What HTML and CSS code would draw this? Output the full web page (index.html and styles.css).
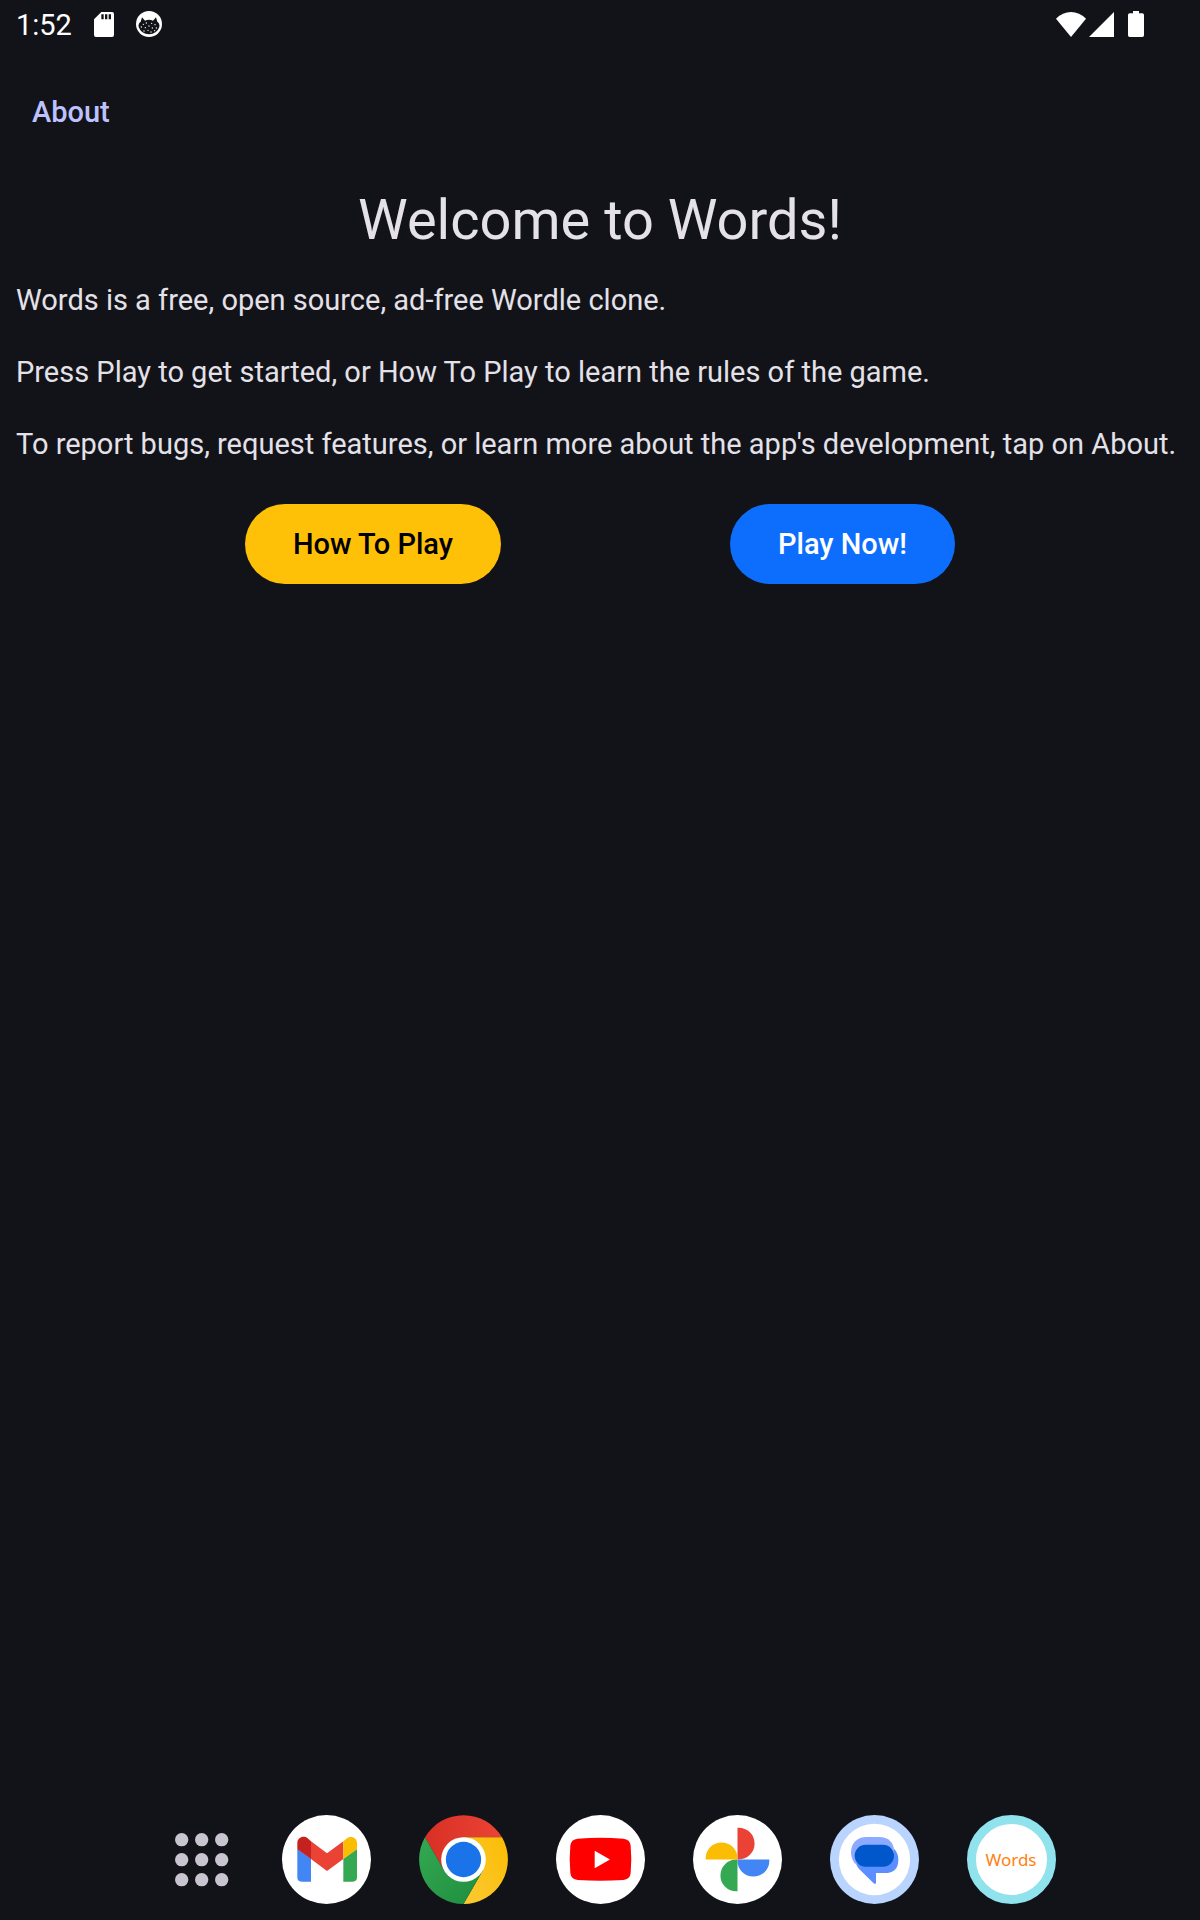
FILE: index.html
```html
<!DOCTYPE html>
<html lang="en">
<head>
<meta charset="utf-8">
<meta name="viewport" content="width=device-width, initial-scale=1">
<title>Words</title>
<link rel="stylesheet" href="styles.css">
</head>
<body>
<header class="status-bar">
  <div class="status-group status-left">
    <time class="clock">1:52</time>
    <svg class="status-sd" viewBox="0 0 60 75" role="img" aria-label="SD card"><path fill="#fff" fill-rule="evenodd" d="M22 0H54Q60 0 60 6V69Q60 75 54 75H6Q0 75 0 69V22ZM22 7V22H29V7ZM33 7V22H40V7ZM44 7V22H51V7Z"/></svg>
    <svg class="status-cat" viewBox="0 0 78 78" role="img" aria-label="Notification">
      <circle cx="39" cy="39" r="39" fill="#fff"/>
      <path fill="#121318" d="M18 19L27 29Q39 24 51 29L60 19L64 32Q72 38 70 48Q62 70 39 70T8 48Q6 38 14 32Z"/>
      <g fill="#fff"><circle cx="22" cy="40" r="2"/><circle cx="31" cy="36" r="2"/><circle cx="47" cy="37" r="2"/><circle cx="57" cy="41" r="2"/><circle cx="16" cy="48" r="2"/><circle cx="28" cy="50" r="2"/><circle cx="39" cy="45" r="2"/><circle cx="49" cy="51" r="2"/><circle cx="61" cy="51" r="2"/><circle cx="24" cy="60" r="2"/><circle cx="36" cy="58" r="2"/><circle cx="45" cy="63" r="2"/><circle cx="56" cy="59" r="2"/></g>
    </svg>
  </div>
  <div class="status-group status-right">
    <svg class="status-wifi" viewBox="0 0 90 75" role="img" aria-label="Wi-Fi"><path fill="#fff" d="M45 75L0 20Q20 0 45 0T90 20Z"/></svg>
    <svg class="status-signal" viewBox="0 0 75 75" role="img" aria-label="Signal"><path fill="#fff" d="M0 75L75 0V75Z"/></svg>
    <svg class="status-battery" viewBox="0 0 48 78" role="img" aria-label="Battery"><path fill="#fff" d="M15 0H33V7H43Q48 7 48 12V73Q48 78 43 78H5Q0 78 0 73V12Q0 7 5 7H15Z"/></svg>
  </div>
</header>

<nav class="top-nav"><button class="text-button" type="button">About</button></nav>

<main class="content">
  <h1 class="title">Welcome to Words!</h1>
  <div class="intro">
    <p class="copy">Words is a free, open source, ad-free Wordle clone.</p>
    <p class="copy">Press Play to get started, or How To Play to learn the rules of the game.</p>
    <p class="copy">To report bugs, request features, or learn more about the app's development, tap on About.</p>
  </div>
  <div class="actions">
    <button class="pill pill-help" type="button">How To Play</button>
    <button class="pill pill-play" type="button">Play Now!</button>
  </div>
</main>

<footer class="dock">
  <button class="app app-drawer" type="button" aria-label="All apps">
    <svg class="app-icon" viewBox="0 0 267 267"><g fill="#c8c5d0"><circle cx="74" cy="74" r="20"/><circle cx="134" cy="74" r="20"/><circle cx="194" cy="74" r="20"/><circle cx="74" cy="134" r="20"/><circle cx="134" cy="134" r="20"/><circle cx="194" cy="134" r="20"/><circle cx="74" cy="194" r="20"/><circle cx="134" cy="194" r="20"/><circle cx="194" cy="194" r="20"/></g></svg>
  </button>
  <div class="favorites">
    <button class="app" type="button" aria-label="Gmail">
      <svg class="app-icon" viewBox="0 0 267 267"><circle cx="133.500" cy="133.500" r="133.500" fill="#fff"/><path fill="#4285f4" d="M46 102L87 131V200H59Q46 200 46 187Z"/><path fill="#34a853" d="M184 131L225 102V187Q225 200 212 200H184Z"/><path fill="#c5221f" d="M46 103V84C46 68 64 60 77 70L87 79V132Z"/><path fill="#ea4335" d="M87 79L135 115L184 79V132L135 168L87 132Z"/><path fill="#fbbc04" d="M184 79L195 70C208 60 225 69 225 84V103L184 132Z"/></svg>
    </button>
    <button class="app" type="button" aria-label="Chrome">
      <svg class="app-icon" viewBox="0 0 267 267"><defs><linearGradient id="red" x1="0" x2="1"><stop stop-color="#d93025"/><stop offset="1" stop-color="#ea4335"/></linearGradient><linearGradient id="green" x1="1" y1="1" x2="0" y2="0"><stop stop-color="#1e8e3e"/><stop offset="1" stop-color="#34a853"/></linearGradient><linearGradient id="yellow" x1="0" y1="1" x2="1" y2="0"><stop stop-color="#fcc934"/><stop offset="1" stop-color="#fbbc04"/></linearGradient></defs><path fill="url(#red)" d="M18 67A133.500 133.500 0 0 1 249 67H133.500V133.500L76 167Z"/><path fill="url(#yellow)" d="M249 67A133.500 133.500 0 0 1 133.500 267L191 167L133.500 133.500V67Z"/><path fill="url(#green)" d="M133.500 267A133.500 133.500 0 0 1 18 67L76 167L133.500 133.500L191 167Z"/><circle cx="133.500" cy="133.500" r="67" fill="#fff"/><circle cx="133.500" cy="133.500" r="53" fill="#1a73e8"/></svg>
    </button>
    <button class="app" type="button" aria-label="YouTube">
      <svg class="app-icon" viewBox="0 0 267 267"><circle cx="133.500" cy="133.500" r="133.500" fill="#fff"/><path fill="red" d="M65 71Q133 66 202 71Q222 73 224 92Q228 133 224 174Q222 193 202 195Q133 200 65 195Q45 193 43 174Q39 133 43 92Q45 73 65 71Z"/><path fill="#fff" d="M116 107L162 133.500L116 160Z"/></svg>
    </button>
    <button class="app" type="button" aria-label="Photos">
      <svg class="app-icon" viewBox="0 0 267 267"><circle cx="133.500" cy="133.500" r="133.500" fill="#fff"/><path fill="#ea4335" d="M133.500 38H137A47.500 47.500 0 0 1 137 133.500H133.500Z"/><path fill="#4285f4" d="M133.500 133.500H229V137A47.500 47.500 0 0 1 133.500 137Z"/><path fill="#34a853" d="M133.500 133.500V229H130A47.500 47.500 0 0 1 130 133.500Z"/><path fill="#fbbc04" d="M133.500 133.500H38V130A47.500 47.500 0 0 1 133.500 130Z"/></svg>
    </button>
    <button class="app" type="button" aria-label="Messages">
      <svg class="app-icon" viewBox="0 0 267 267"><circle cx="133.500" cy="133.500" r="133.500" fill="#b8d4ff"/><circle cx="133.500" cy="133.500" r="107" fill="#fff"/><path fill="#5b8fff" d="M74 130H180L192 101Q205 114 205 134Q205 174 164 174H138V203Q137 209 131 205L88 163Q78 153 74 130Z"/><path fill="#8caaff" d="M109 66H147C176 66 192 84 192 108V130L75 146Q63 132 63 112C63 84 82 66 109 66Z"/><rect x="74" y="89" width="118" height="66" rx="33" fill="#0057cc"/></svg>
    </button>
    <button class="app words-app" type="button">Words</button>
  </div>
</footer>
</body>
</html>
```
FILE: styles.css
```css
* { box-sizing: border-box; }
body {
  margin: 0;
  min-height: 100vh;
  display: flex;
  flex-direction: column;
  background: #121318;
  color: #e4e1e9;
  font-family: Roboto, sans-serif;
  font-size: 29px;
  line-height: 36px;
}
button {
  border: 0;
  padding: 0;
  background: none;
  font: inherit;
  cursor: pointer;
}
svg { display: block; }
.status-bar {
  display: flex;
  justify-content: space-between;
  align-items: center;
  height: 48px;
  padding: 0 56px 0 16px;
  color: #fff;
}
.status-group { display: flex; align-items: center; }
.status-left { gap: 22px; }
.clock { line-height: 48px; padding-top: 2px; }
.status-sd { width: 20px; height: 25px; }
.status-cat { width: 26px; height: 26px; }
.status-wifi { width: 30px; height: 25px; margin-right: 3px; }
.status-signal { width: 25px; height: 25px; margin-right: 14px; }
.status-battery { width: 16px; height: 26px; }
.top-nav { padding: 24px 16px; }
.text-button {
  padding: 22px 16px;
  color: #bdc2ff;
  font-weight: 500;
}
.content {
  flex: 1;
  padding: 8px 16px;
}
.title {
  margin: 0 0 26px;
  font-size: 56px;
  font-weight: 400;
  line-height: 72px;
  text-align: center;
}
.intro {
  display: flex;
  flex-direction: column;
  gap: 36px;
  margin-bottom: 42px;
}
.copy { margin: 0; }
.actions { display: flex; justify-content: space-evenly; }
.pill {
  height: 80px;
  padding: 0 48px;
  border-radius: 40px;
  font-weight: 500;
}
.pill-help { background: #ffc107; color: #000; }
.pill-play { background: #0d6efd; color: #fff; }
.dock {
  display: flex;
  justify-content: center;
  gap: 36px;
  padding: 0 0 16px 12px;
}
.favorites { display: flex; gap: 48px; }
.app { width: 89px; height: 89px; border-radius: 50%; }
.app-icon { width: 100%; height: 100%; }
.words-app {
  border: 9px solid #90e2ec;
  background: #fff;
  color: #ff7f11;
  font-family: "Noto Sans", sans-serif;
  font-size: 17px;
}
```
